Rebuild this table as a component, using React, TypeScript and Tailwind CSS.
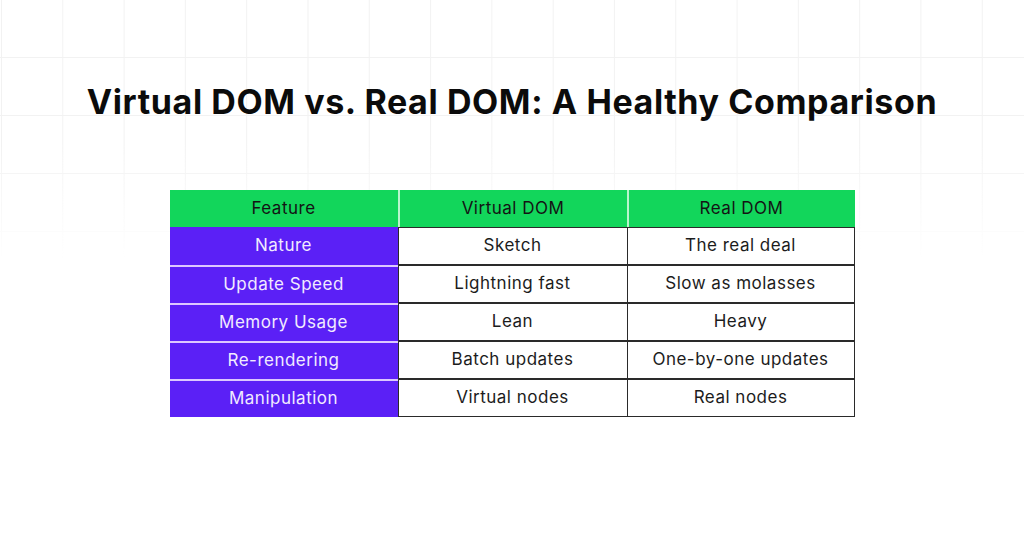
import React from "react"

type Row = {
  feature: string
  virtual: string
  real: string
}

const rows: Row[] = [
  { feature: "Nature", virtual: "Sketch", real: "The real deal" },
  { feature: "Update Speed", virtual: "Lightning fast", real: "Slow as molasses" },
  { feature: "Memory Usage", virtual: "Lean", real: "Heavy" },
  { feature: "Re-rendering", virtual: "Batch updates", real: "One-by-one updates" },
  { feature: "Manipulation", virtual: "Virtual nodes", real: "Real nodes" },
]

const font = { fontFamily: "Inter, 'Noto Sans', sans-serif" }

export default function App() {
  return (
    <div className="relative h-[536px] w-[1024px] overflow-hidden bg-white" style={font}>
      {/* faint grid in the top part, fading out */}
      <div className="pointer-events-none absolute inset-x-0 top-0 h-[260px] bg-[linear-gradient(to_right,#f2f2f2_1px,transparent_1px),linear-gradient(to_bottom,#f2f2f2_1px,transparent_1px)] bg-[size:61.3px_58px] bg-[position:1px_-1px] [mask-image:linear-gradient(to_bottom,black_55%,transparent)]" />

      <div className="relative flex flex-col items-center pt-[78px]">
        <h1 className="text-[34px] font-bold leading-[48px] tracking-[0.6px] text-[#0b0b0b]">
          Virtual DOM vs. Real DOM: A Healthy Comparison
        </h1>

        <div className="mt-[64px] w-[685px] text-[17px] tracking-[0.5px]">
          <div className="grid h-[37px] grid-cols-[228px_229px_228px] bg-[#12d65b] text-[#141414]">
            <div className="flex items-center justify-center">Feature</div>
            <div className="flex items-center justify-center border-l-2 border-[#b9f5cc]">Virtual DOM</div>
            <div className="flex items-center justify-center border-l-2 border-[#b9f5cc]">Real DOM</div>
          </div>
          {rows.map((r, i) => (
            <div key={r.feature} className="grid h-[38px] grid-cols-[228px_229px_228px]">
              <div
                className={
                  "flex items-center justify-center bg-[#5b20f6] text-[#f1eaff] " +
                  (i > 0 ? "border-t-2 border-[#dcc8ff]" : "")
                }
              >
                {r.feature}
              </div>
              <div className="flex items-center justify-center border-b-[1.5px] border-l-[1.5px] border-t-[1.5px] border-[#2a2a2a] bg-white pb-[1px] text-[#1c1c1c]">
                {r.virtual}
              </div>
              <div className="flex items-center justify-center border-[1.5px] border-[#2a2a2a] bg-white pb-[1px] text-[#1c1c1c]">
                {r.real}
              </div>
            </div>
          ))}
        </div>
      </div>
    </div>
  )
}
